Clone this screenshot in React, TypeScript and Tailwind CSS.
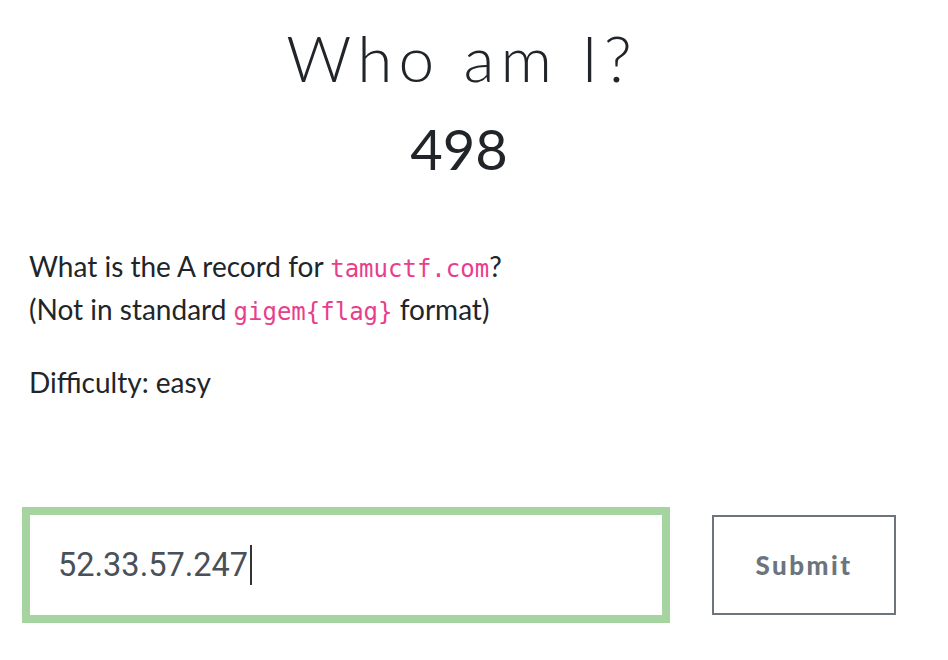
export default function App() {
  return (
    <div className="w-[948px] h-[660px] bg-white overflow-hidden" style={{ fontFamily: "Lato, sans-serif" }}>
      <div className="ml-[22px] w-[874px] flex flex-col">
        <h1 className="text-center text-[64px] leading-[74px] font-light text-[#212529] tracking-[6px] mt-[21px] pl-[6px]" style={{ fontFamily: "Lato, sans-serif" }}>
          Who am I?
        </h1>
        <h2 className="text-center text-[56px] leading-[64px] font-normal text-[#212529] mt-[22px]">498</h2>
        <div className="pl-[7px] mt-[64px] text-[28px] leading-[43px] text-[#212529]">
          <p>
            What is the A record for{" "}
            <code className="text-[#e83e8c] text-[24px] leading-none" style={{ fontFamily: "'DejaVu Sans Mono', monospace" }}>tamuctf.com</code>?
            <br />
            (Not in standard{" "}
            <code className="text-[#e83e8c] text-[24px] leading-none" style={{ fontFamily: "'DejaVu Sans Mono', monospace" }}>{"gigem{flag}"}</code> format)
          </p>
          <p className="mt-[30px]">Difficulty: easy</p>
        </div>
        <div className="mt-[103px] flex items-center">
          <div className="w-[648px] h-[116px] border-[8px] border-[#a6d4a0] flex items-center pl-[28px]">
            <span className="text-[32.5px] text-[#495057]" style={{ fontFamily: "Roboto, sans-serif" }}>52.33.57.247</span>
            <span className="w-[2px] h-[40px] bg-[#333] ml-[2px]"></span>
          </div>
          <button className="ml-[42px] w-[184px] h-[100px] border-2 border-[#6c757d] text-[#6c757d] text-[26px] font-black tracking-[2.5px]">
            Submit
          </button>
        </div>
      </div>
    </div>
  );
}
